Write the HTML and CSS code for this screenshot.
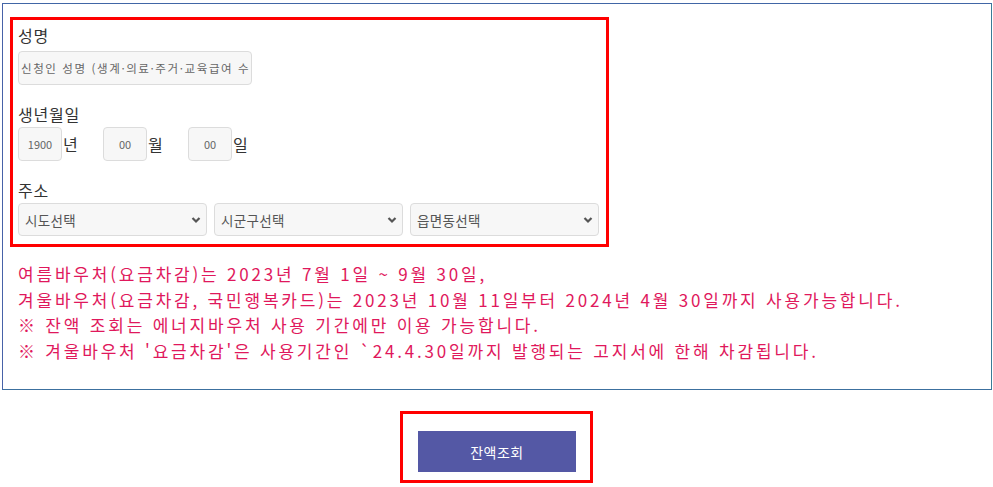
FILE: index.html
```html
<!DOCTYPE html>
<html lang="ko">
<head>
<meta charset="utf-8">
<title>에너지바우처 잔액조회</title>
<link rel="stylesheet" href="styles.css">
</head>
<body>
<div class="panel">
  <div class="form-box">
    <div class="group first">
      <div class="label">성명</div>
      <input class="name-input" type="text" placeholder="신청인 성명 (생계·의료·주거·교육급여 수급자 성명)">
    </div>
    <div class="group">
      <div class="label">생년월일</div>
      <div class="birth-row">
        <input class="small-input" type="text" placeholder="1900"><span class="unit">년</span>
        <input class="small-input" type="text" placeholder="00"><span class="unit">월</span>
        <input class="small-input" type="text" placeholder="00"><span class="unit">일</span>
      </div>
    </div>
    <div class="group">
      <div class="label">주소</div>
      <div class="addr-row">
        <div class="sel-wrap">
          <select class="sel"><option>시도선택</option></select>
          <svg class="chev" viewBox="0 0 10 8" width="10" height="8"><path d="M1.5 2 L5 5.5 L8.5 2" fill="none" stroke="#555" stroke-width="2.2"/></svg>
        </div>
        <div class="sel-wrap">
          <select class="sel"><option>시군구선택</option></select>
          <svg class="chev" viewBox="0 0 10 8" width="10" height="8"><path d="M1.5 2 L5 5.5 L8.5 2" fill="none" stroke="#555" stroke-width="2.2"/></svg>
        </div>
        <div class="sel-wrap">
          <select class="sel"><option>읍면동선택</option></select>
          <svg class="chev" viewBox="0 0 10 8" width="10" height="8"><path d="M1.5 2 L5 5.5 L8.5 2" fill="none" stroke="#555" stroke-width="2.2"/></svg>
        </div>
      </div>
    </div>
  </div>
  <div class="notice">
    <p>여름바우처(요금차감)는 2023년 7월 1일 ~ 9월 30일,</p>
    <p>겨울바우처(요금차감, 국민행복카드)는 2023년 10월 11일부터 2024년 4월 30일까지 사용가능합니다.</p>
    <p>※ 잔액 조회는 에너지바우처 사용 기간에만 이용 가능합니다.</p>
    <p>※ 겨울바우처 '요금차감'은 사용기간인 `24.4.30일까지 발행되는 고지서에 한해 차감됩니다.</p>
  </div>
</div>
<div class="btn-area">
  <div class="btn-box">
    <button class="btn" type="button">잔액조회</button>
  </div>
</div>
</body>
</html>
```

FILE: styles.css
```css
* { box-sizing: border-box; }
html, body { margin: 0; padding: 0; background: #fff; }
body {
  font-family: "Noto Sans CJK KR", "Noto Sans", sans-serif;
  color: #333;
}
.panel {
  margin: 3px 2px 0 2px;
  width: 990px;
  height: 387px;
  border: 1px solid;
  border-color: #4166a6 #3a7b97 #3c709f #4862a8;
  padding: 13px 0 0 7px;
}
.form-box {
  width: 599px;
  border: 3px solid #ff0000;
  padding: 4px 5px 8px 5px;
}
.group { margin-top: 18px; }
.group.first { margin-top: 0; }
.label {
  font-size: 16px;
  line-height: 22px;
  letter-spacing: 0.8px;
  color: #333;
  margin-bottom: 2px;
}
.group.first .label { margin-bottom: 5px; }
input {
  font-family: "Noto Sans CJK KR", sans-serif;
  border: 1px solid #dcdcdc;
  border-radius: 4px;
  background: #f7f7f7;
  outline: none;
  margin: 0;
}
input::placeholder { color: #666; opacity: 1; }
.name-input {
  display: block;
  width: 234px;
  height: 34px;
  padding: 0 2px;
  font-size: 11.5px;
  letter-spacing: 1.6px;
}
.birth-row {
  display: flex;
  align-items: center;
  height: 34px;
}
.small-input {
  width: 44px;
  height: 34px;
  padding: 0;
  text-align: center;
  font-size: 11px;
}
.unit {
  font-size: 16px;
  line-height: 22px;
  width: 41px;
  padding-left: 1px;
  color: #333;
}
.addr-row {
  display: flex;
  gap: 7px;
}
.sel-wrap {
  position: relative;
  width: 189px;
  height: 33px;
}
.sel {
  appearance: none;
  -webkit-appearance: none;
  width: 100%;
  height: 100%;
  border: 1px solid #dcdcdc;
  border-radius: 4px;
  background: #f7f7f7;
  font-family: "Noto Sans CJK KR", sans-serif;
  font-size: 13.5px;
  letter-spacing: 0.3px;
  color: #555;
  padding: 0 0 0 6px;
  margin: 0;
  outline: none;
}
.chev {
  position: absolute;
  right: 6px;
  top: 13px;
  pointer-events: none;
}
.notice {
  margin-top: 14px;
  padding-left: 8px;
  color: #e0185c;
  font-size: 17px;
  line-height: 25.5px;
  letter-spacing: 2.8px;
}
.notice p { margin: 0; white-space: nowrap; }
.btn-area {
  display: flex;
  justify-content: center;
  margin-top: 21px;
}
.btn-box {
  border: 3px solid #ff0000;
  padding: 17px 14px 8px 15px;
}
.btn {
  display: block;
  width: 158px;
  height: 41px;
  border: none;
  background: #5458a5;
  color: #fff;
  font-family: "Noto Sans CJK KR", sans-serif;
  font-size: 14px;
  letter-spacing: 0.5px;
  margin: 0;
}
```
